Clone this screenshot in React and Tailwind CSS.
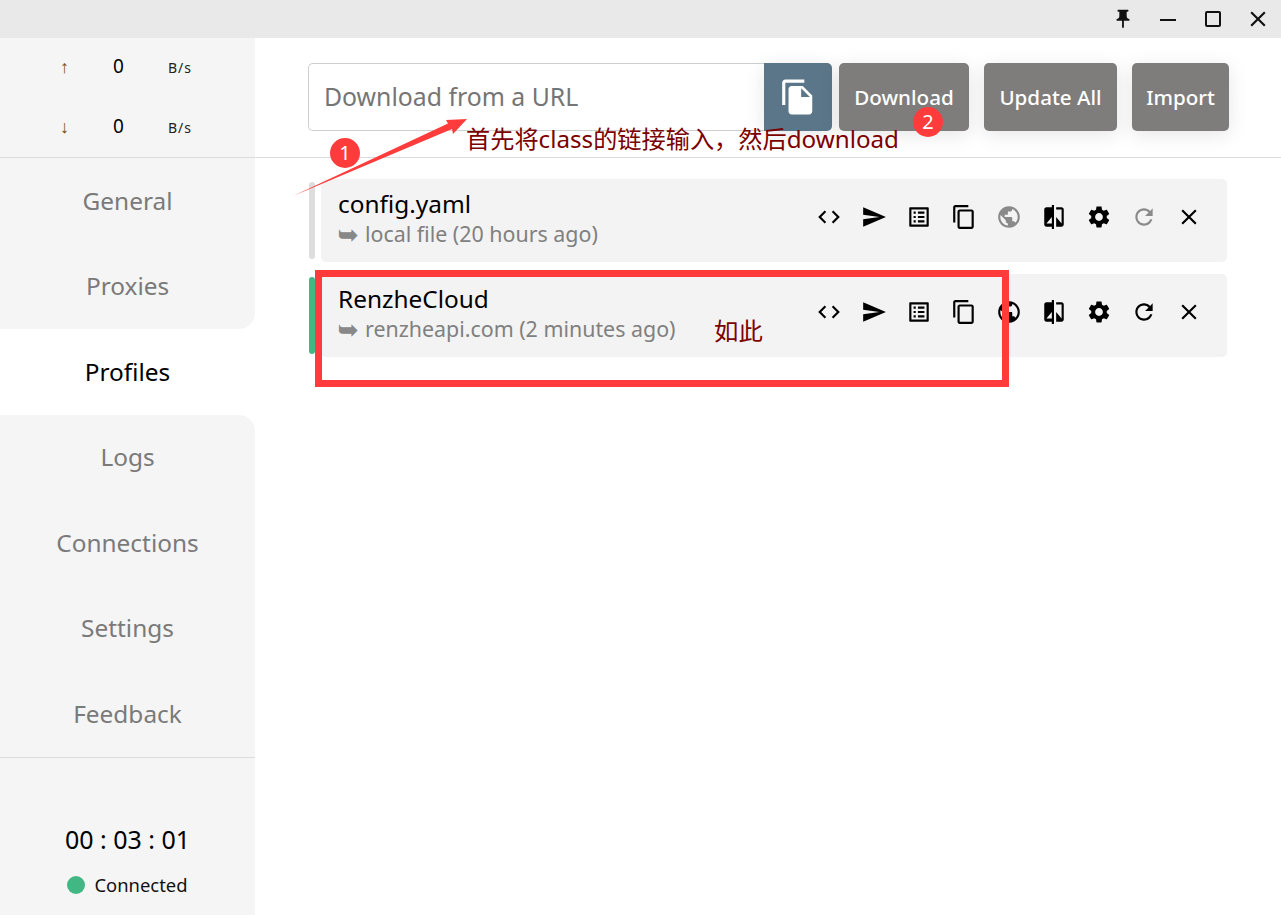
const I = {
  code: 'M9.4 16.6L4.8 12l4.6-4.6L8 6l-6 6 6 6 1.4-1.4zm5.2 0l4.6-4.6-4.6-4.6L16 6l6 6-6 6-1.4-1.4z',
  send: 'M2.01 21L23 12 2.01 3 2 10l15 2-15 2z',
  list: 'M19 5v14H5V5h14m1.1-2H3.9c-.5 0-.9.4-.9.9v16.2c0 .4.4.9.9.9h16.2c.4 0 .9-.5.9-.9V3.9c0-.5-.5-.9-.9-.9zM11 7h6v2h-6V7zm0 4h6v2h-6v-2zm0 4h6v2h-6zM7 7h2v2H7zm0 4h2v2H7zm0 4h2v2H7z',
  copy: 'M16 1H4c-1.1 0-2 .9-2 2v14h2V3h12V1zm3 4H8c-1.1 0-2 .9-2 2v14c0 1.1.9 2 2 2h11c1.1 0 2-.9 2-2V7c0-1.1-.9-2-2-2zm0 16H8V7h11v14z',
  globe: 'M12 2C6.48 2 2 6.48 2 12s4.48 10 10 10 10-4.48 10-10S17.52 2 12 2zm-1 17.93c-3.95-.49-7-3.85-7-7.93 0-.62.08-1.21.21-1.79L9 15v1c0 1.1.9 2 2 2v1.93zm6.9-2.54c-.26-.81-1-1.39-1.9-1.39h-1v-3c0-.55-.45-1-1-1H8v-2h2c.55 0 1-.45 1-1V7h2c1.1 0 2-.9 2-2v-.41c2.93 1.19 5 4.06 5 7.41 0 2.08-.8 3.97-2.1 5.39z',
  compare: 'M10 3H5c-1.1 0-2 .9-2 2v14c0 1.1.9 2 2 2h5v2h2V1h-2v2zm0 15H5l5-6v6zm9-15h-5v2h5v13l-5-6v9h5c1.1 0 2-.9 2-2V5c0-1.1-.9-2-2-2z',
  gear: 'M19.14 12.94c.04-.3.06-.61.06-.94 0-.32-.02-.64-.07-.94l2.03-1.58c.18-.14.23-.41.12-.61l-1.92-3.32c-.12-.22-.37-.29-.59-.22l-2.39.96c-.5-.38-1.03-.7-1.62-.94l-.36-2.54c-.04-.24-.24-.41-.48-.41h-3.84c-.24 0-.43.17-.47.41l-.36 2.54c-.59.24-1.13.57-1.62.94l-2.39-.96c-.22-.08-.47 0-.59.22L2.74 8.87c-.12.21-.08.47.12.61l2.03 1.58c-.05.3-.09.63-.09.94s.02.64.07.94l-2.03 1.58c-.18.14-.23.41-.12.61l1.92 3.32c.12.22.37.29.59.22l2.39-.96c.5.38 1.03.7 1.62.94l.36 2.54c.05.24.24.41.48.41h3.84c.24 0 .44-.17.47-.41l.36-2.54c.59-.24 1.13-.56 1.62-.94l2.39.96c.22.08.47 0 .59-.22l1.92-3.32c.12-.22.07-.47-.12-.61l-2.01-1.58zM12 15.6c-1.98 0-3.6-1.62-3.6-3.6s1.62-3.6 3.6-3.6 3.6 1.62 3.6 3.6-1.62 3.6-3.6 3.6z',
  refresh: 'M17.65 6.35C16.2 4.9 14.21 4 12 4c-4.42 0-7.99 3.58-7.99 8s3.57 8 7.99 8c3.73 0 6.84-2.55 7.73-6h-2.08c-.82 2.33-3.04 4-5.65 4-3.31 0-6-2.69-6-6s2.69-6 6-6c1.66 0 3.14.69 4.22 1.78L13 11h7V4l-2.35 2.35z',
  close: 'M19 6.41L17.59 5 12 10.59 6.41 5 5 6.41 10.59 12 5 17.59 6.41 19 12 13.41 17.59 19 19 17.59 13.41 12z',
  fileCopy: 'M16 1H4c-1.1 0-2 .9-2 2v14h2V3h12V1zm-1 4l6 6v10c0 1.1-.9 2-2 2H7.99C6.89 23 6 22.1 6 21l.01-14c0-1.1.89-2 1.99-2h7zm-1 7h5.5L14 6.5V12z',
  pin: 'M16 9V4h1c.55 0 1-.45 1-1s-.45-1-1-1H7c-.55 0-1 .45-1 1s.45 1 1 1h1v5c0 1.66-1.34 3-3 3v2h5.97v7l1 1 1-1v-7H19v-2c-1.66 0-3-1.34-3-3z',
};

function Icon({ d, className = 'w-[26px] h-[26px]' }) {
  return (
    <svg viewBox="0 0 24 24" className={className} fill="currentColor">
      <path d={d} />
    </svg>
  );
}

function Speed({ arrow }) {
  return (
    <div className="flex items-center h-[60px]">
      <span className="w-[65px] pl-[60px] text-[18px] text-[#7a4e08] font-['Liberation_Sans',sans-serif]">{arrow}</span>
      <span className="w-[60px] pl-[48px] text-[19px] text-black -mt-[3px]">0</span>
      <span className="ml-[43px] text-[14px] tracking-[1px] text-[#222]">B/s</span>
    </div>
  );
}

function NavItem({ label, className = 'bg-[#f5f5f5] text-[#7a7a7a]' }) {
  return (
    <div className={`h-[85.5px] pt-[1px] flex items-center justify-center text-[24.4px] ${className}`}>
      {label}
    </div>
  );
}

function Sidebar() {
  return (
    <div className="w-[255px] shrink-0 bg-white flex flex-col">
      <div className="h-[120px] bg-[#f5f5f5] border-b border-[#dcdcdc] flex flex-col">
        <Speed arrow="↑" />
        <Speed arrow="↓" />
      </div>
      <NavItem label="General" />
      <NavItem label="Proxies" className="rounded-br-[16px] bg-[#f5f5f5] text-[#7a7a7a]" />
      <NavItem label="Profiles" className="bg-white text-black" />
      <NavItem label="Logs" className="rounded-tr-[16px] bg-[#f5f5f5] text-[#7a7a7a]" />
      <NavItem label="Connections" />
      <NavItem label="Settings" />
      <NavItem label="Feedback" />
      <div className="bg-[#f5f5f5] border-t border-[#dcdcdc] flex-1 flex flex-col items-center">
        <div className="mt-[63px] text-[25px] leading-[36px] text-black">00 : 03 : 01</div>
        <div className="mt-[16px] flex items-center text-[18.4px] leading-[24px] text-[#111]">
          <span className="w-[18px] h-[18px] rounded-full bg-[#41b883] mr-[9px]" />
          Connected
        </div>
      </div>
    </div>
  );
}

function ActionButton({ label, className }) {
  return (
    <button className={`h-[68px] rounded-[5px] bg-[#7e7d7c] text-white text-[20.6px] font-medium shadow-[0_4px_20px_rgba(0,0,0,0.1)] ${className}`}>
      {label}
    </button>
  );
}

function ProfileRow({ name, sub, active, dimmed }) {
  const actions = [I.code, I.send, I.list, I.copy, I.globe, I.compare, I.gear, I.refresh, I.close];
  return (
    <div className="flex h-[83px] items-center">
      <div className={`w-[6px] h-[77px] rounded-[3px] ${active ? 'bg-[#41b883]' : 'bg-[#dddddd]'}`} />
      <div className="ml-[6px] flex-1 h-full rounded-[5px] bg-[#f3f3f3] flex pl-[17px] pr-[16px]">
        <div className="pt-[8px] flex-1">
          <div className="text-[24.4px] leading-[34px] text-black">{name}</div>
          <div className="-mt-[1px] text-[21.4px] leading-[28px] text-[#808080] flex items-center">
            <span className="w-[27px] text-[24px] leading-[28px] text-[#888] font-bold">➥</span>
            {sub}
          </div>
        </div>
        <div className="flex pt-[25px]">
          {actions.map((d, i) => (
            <div
              key={i}
              className={`w-[45px] h-[26px] flex justify-center ${dimmed && (i === 4 || i === 7) ? 'text-[#8a8a8a]' : 'text-black'}`}
            >
              <Icon d={d} />
            </div>
          ))}
        </div>
      </div>
    </div>
  );
}

function Annotations() {
  return (
    <>
      <svg className="absolute left-0 top-0 pointer-events-none" width="1281" height="915">
        <polygon points="293,196 448,123.5 446,120 467,119 453,134 452,129" fill="#ff3b3b" />
      </svg>
      <div className="absolute left-[330px] top-[138px] w-[30px] h-[30px] rounded-full bg-[#ff3b3b] text-white text-[20px] flex items-center justify-center">1</div>
      <div className="absolute left-[913px] top-[107px] w-[30px] h-[30px] rounded-full bg-[#ff3b3b] text-white text-[20px] flex items-center justify-center">2</div>
      <div className="absolute left-[466px] top-[122px] text-[24.2px] leading-[34px] text-[#7b0000] whitespace-nowrap">首先将class的链接输入，然后download</div>
      <div className="absolute left-[714px] top-[314px] text-[24.4px] leading-[34px] text-[#7b0000]">如此</div>
      <div className="absolute left-[315px] top-[270px] w-[694px] h-[117px] border-[7px] border-[#ff3b3b]" />
    </>
  );
}

export default function App() {
  return (
    <div className="relative h-[915px] w-[1281px] overflow-hidden bg-white flex flex-col font-['Noto_Sans','Noto_Sans_CJK_SC',sans-serif]">
      <div className="h-[38px] shrink-0 bg-[#e9e9e9] flex justify-end items-center text-[#111]">
        <div className="w-[45px] flex justify-center"><Icon d={I.pin} className="w-[22px] h-[22px]" /></div>
        <div className="w-[45px] flex justify-center"><span className="w-[16px] h-[2px] bg-[#111] mt-[1px]" /></div>
        <div className="w-[45px] flex justify-center"><span className="w-[16px] h-[16px] border-2 border-[#111] rounded-[2px]" /></div>
        <div className="w-[45px] mr-[1px] flex justify-center"><Icon d={I.close} className="w-[26px] h-[26px]" /></div>
      </div>
      <div className="flex flex-1">
        <Sidebar />
        <div className="flex-1 flex flex-col">
          <div className="h-[120px] border-b border-[#dcdcdc] pt-[25px] pl-[53px] pr-[52px] flex">
            <div className="w-[456px] h-[68px] border border-[#cfcfcf] border-r-0 rounded-l-[5px] pl-[15px] flex items-center text-[24.8px] text-[#757575]">
              Download from a URL
            </div>
            <div className="w-[68px] h-[68px] rounded-r-[5px] bg-[#5b7689] text-white flex items-center justify-center shadow-[0_4px_20px_rgba(0,0,0,0.1)]">
              <Icon d={I.fileCopy} className="w-[38px] h-[38px]" />
            </div>
            <ActionButton label="Download" className="ml-[7px] w-[130px]" />
            <ActionButton label="Update All" className="ml-[15px] w-[133px]" />
            <ActionButton label="Import" className="ml-[15px] w-[97px]" />
          </div>
          <div className="pt-[21px] pl-[54px] pr-[54px] flex flex-col gap-[12px]">
            <ProfileRow name="config.yaml" sub="local file (20 hours ago)" dimmed />
            <ProfileRow name="RenzheCloud" sub="renzheapi.com (2 minutes ago)" active />
          </div>
        </div>
      </div>
      <Annotations />
    </div>
  );
}
